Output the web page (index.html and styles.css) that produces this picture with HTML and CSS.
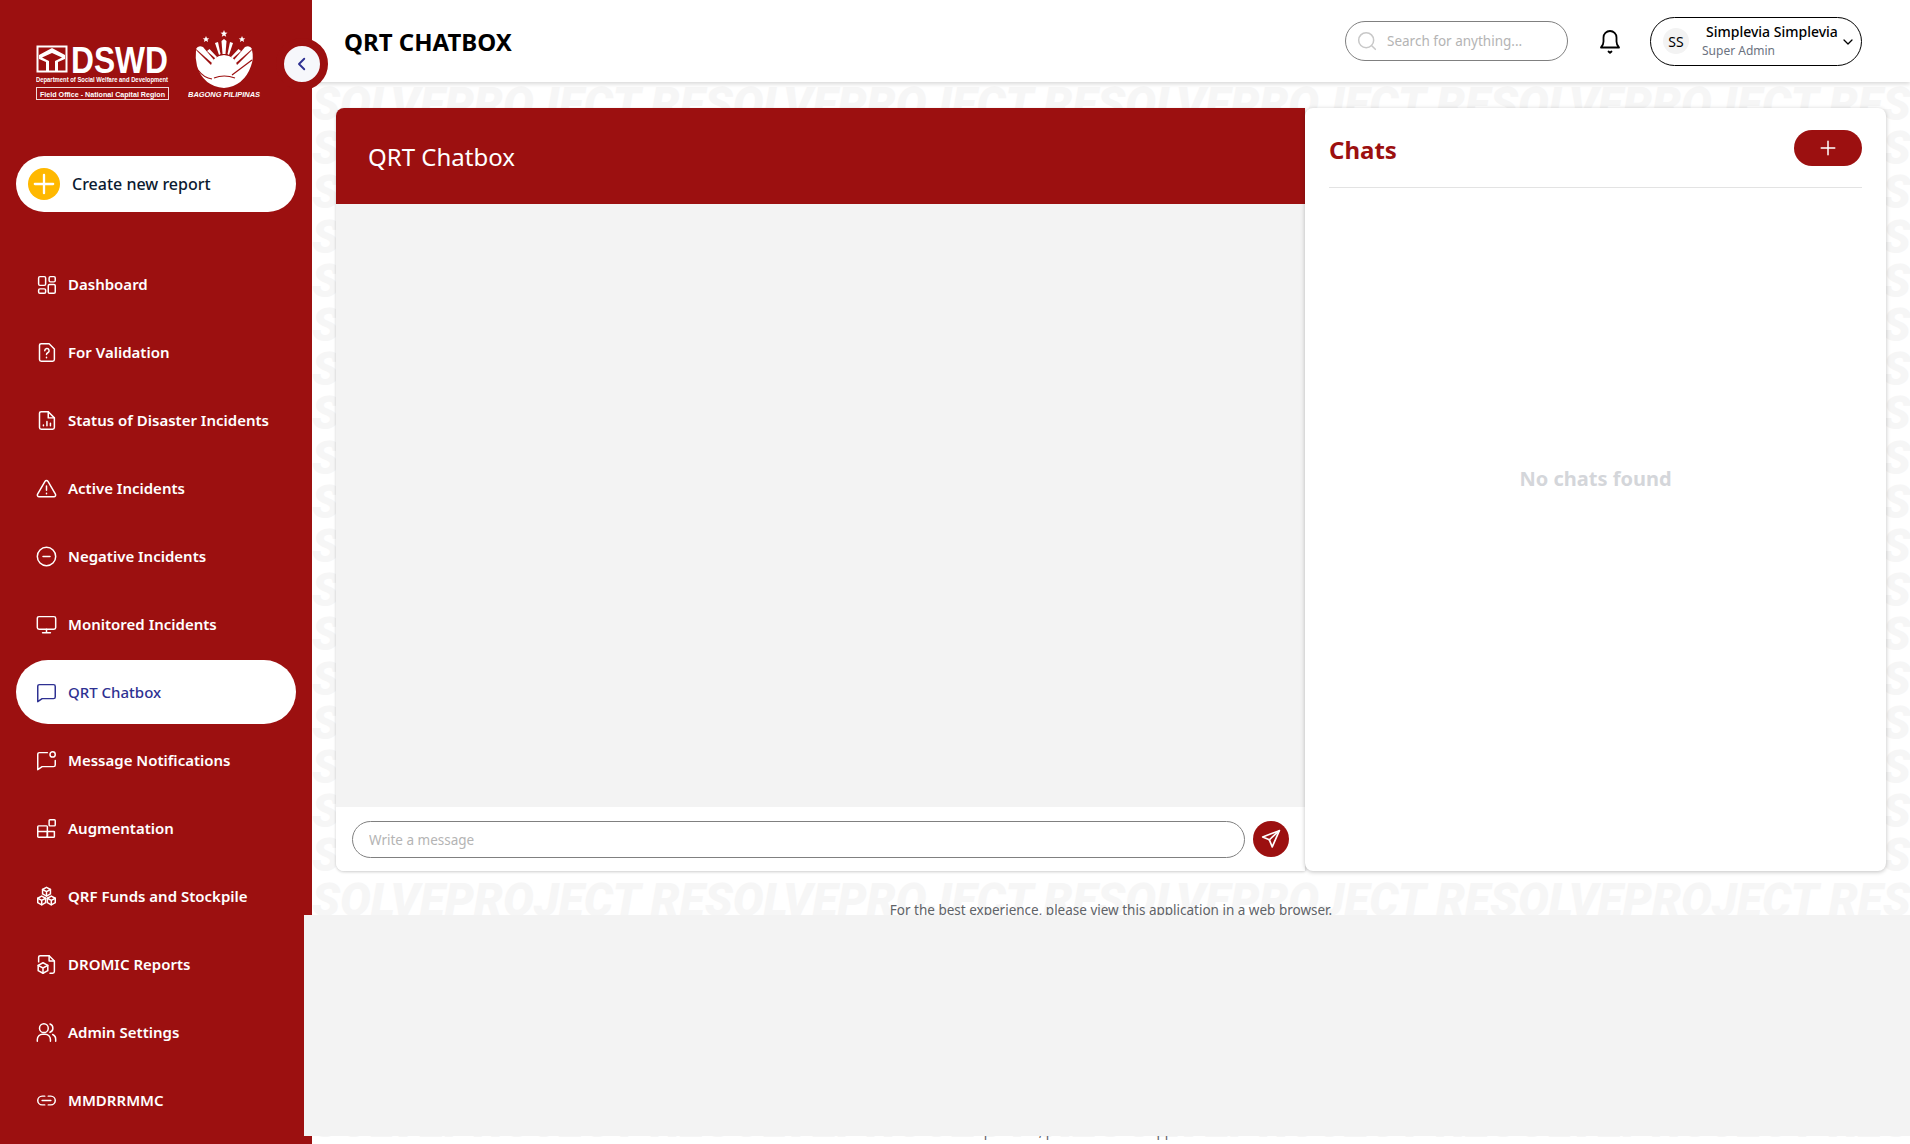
FILE: index.html
```html
<!DOCTYPE html>
<html lang="en">
<head>
    <meta charset="UTF-8">
    <meta name="viewport" content="width=device-width, initial-scale=1.0">
    <title>QRT Chatbox</title>
    <link rel="stylesheet" href="styles.css">
</head>
<body>

<aside class="sidebar">
    <div class="logos">
        <svg class="logo-dswd" width="134" height="72" viewBox="0 0 134 72">
            <rect x="0.5" y="17.5" width="31" height="27" fill="#fff"/>
            <rect x="2.5" y="19.5" width="27" height="23" fill="#9c1010"/>
            <path d="M3 27 L16 20 L29 27 V31 L22 34 V43 H19 V33 L26 29.500 L16 25 L6 29.500 L13 33 V43 H10 V34 L3 31 Z" fill="#fff"/>
            <text x="35" y="44.500" class="logo-word" textLength="97" lengthAdjust="spacingAndGlyphs">DSWD</text>
            <text x="0" y="54" class="logo-sub" textLength="132" lengthAdjust="spacingAndGlyphs">Department of Social Welfare and Development</text>
            <rect x="0.500" y="59.500" width="132" height="12" fill="none" stroke="#fff" stroke-width="1" opacity="0.85"/>
            <text x="4" y="68.500" class="logo-sub" textLength="125" lengthAdjust="spacingAndGlyphs">Field Office - National Capital Region</text>
        </svg>
        <svg class="logo-bagong" width="76" height="72" viewBox="0 0 76 72">
            <g fill="#fff">
                <path d="M36 2 l1 2.500 2.500 0.200 -2 1.600 0.700 2.500 -2.200 -1.400 -2.200 1.400 0.700 -2.500 -2 -1.600 2.500 -0.200 Z"/>
                <path d="M18 8 l1 2.200 2.300 0.200 -1.800 1.400 0.600 2.200 -2.100 -1.200 -2.100 1.200 0.600 -2.200 -1.800 -1.400 2.300 -0.200 Z"/>
                <path d="M54 8 l1 2.200 2.300 0.200 -1.800 1.400 0.600 2.200 -2.100 -1.200 -2.100 1.200 0.600 -2.200 -1.800 -1.400 2.300 -0.200 Z"/>
                <path d="M33.500 13 L36 11 L38.500 13 L37.500 26 H34.500 Z"/>
                <path d="M27 15 L30 14 L32.500 26 L31 27 Z"/>
                <path d="M45 15 L42 14 L39.500 26 L41 27 Z"/>
                <path d="M19 23 L21.500 21 L29 29 L27.500 30.500 Z"/>
                <path d="M53 23 L50.500 21 L43 29 L44.500 30.500 Z"/>
                <path d="M8 21 Q10 17 15 19 L26 32 L24 35 Z"/>
                <path d="M64 21 Q62 17 57 19 L46 32 L48 35 Z"/>
                <path d="M8 22 L23 37 Q25 28 36 27 Q47 28 49 37 L64 22 Q66 30 63 38 Q56 58 36 60 Q15 58 9 38 Q7 30 8 22 Z"/>
            </g>
            <path d="M64 32 L44 47 M26 50 Q36 46 47 50 M10 42 Q16 50 24 51" stroke="#9c1010" stroke-width="1.200" fill="none"/>
            <text x="0" y="69" class="logo-bp" textLength="72" lengthAdjust="spacingAndGlyphs">BAGONG PILIPINAS</text>
        </svg>
    </div>

    <button type="button" class="toggle-btn">
        <svg width="18" height="18" viewBox="0 0 24 24" class="stroke-icon"><path d="M15 5l-7 7 7 7"/></svg>
    </button>

    <a class="create-btn">
        <span class="create-plus">
            <svg width="22" height="22" viewBox="0 0 24 24" class="stroke-icon"><path d="M12 2v20M2 12h20"/></svg>
        </span>
        Create new report
    </a>

    <nav class="nav">
        <a class="nav-item">
            <svg viewBox="0 0 24 24" class="nav-icon"><rect x="3" y="3" width="8" height="10" rx="1.500"/><rect x="15" y="3" width="7" height="6" rx="1.500"/><rect x="3" y="17" width="8" height="5" rx="1.500"/><rect x="14" y="12" width="8" height="10" rx="1.500"/></svg>
            Dashboard
        </a>
        <a class="nav-item">
            <svg viewBox="0 0 24 24" class="nav-icon"><path d="M6 2h9l6 6v12a2 2 0 0 1-2 2H6a2 2 0 0 1-2-2V4a2 2 0 0 1 2-2z"/><path d="M10 10a2.500 2.500 0 1 1 3.500 2.300c-1 .5-1.500 1-1.500 2"/><path d="M12 17.500v.5"/></svg>
            For Validation
        </a>
        <a class="nav-item">
            <svg viewBox="0 0 24 24" class="nav-icon"><path d="M6 2h8l7 7v11a2 2 0 0 1-2 2H6a2 2 0 0 1-2-2V4a2 2 0 0 1 2-2z"/><path d="M14 2v7h7"/><path d="M8.500 18v-1M12.500 18v-5M16.500 18v-3"/></svg>
            Status of Disaster Incidents
        </a>
        <a class="nav-item">
            <svg viewBox="0 0 24 24" class="nav-icon"><path d="M10.300 3.800L1.800 18.500a2 2 0 0 0 1.700 3h17a2 2 0 0 0 1.700-3L13.700 3.800a2 2 0 0 0-3.400 0z"/><path d="M12 9v5M12 17.500v.5"/></svg>
            Active Incidents
        </a>
        <a class="nav-item">
            <svg viewBox="0 0 24 24" class="nav-icon"><circle cx="12" cy="12" r="10.500"/><path d="M8 12h8"/></svg>
            Negative Incidents
        </a>
        <a class="nav-item">
            <svg viewBox="0 0 24 24" class="nav-icon"><rect x="1.500" y="3" width="21" height="14.500" rx="2"/><path d="M12 17.500V21M7.500 21.500h9"/></svg>
            Monitored Incidents
        </a>
        <a class="nav-item nav-item-active">
            <svg viewBox="0 0 24 24" class="nav-icon"><path d="M2 5a2 2 0 0 1 2-2h16a2 2 0 0 1 2 2v12a2 2 0 0 1-2 2H7l-5 3.500z"/></svg>
            QRT Chatbox
        </a>
        <a class="nav-item">
            <svg viewBox="0 0 24 24" class="nav-icon"><path d="M13 3H4a2 2 0 0 0-2 2v17.500L7 19h13a2 2 0 0 0 2-2v-5"/><circle cx="19" cy="5" r="3"/></svg>
            Message Notifications
        </a>
        <a class="nav-item">
            <svg viewBox="0 0 24 24" class="nav-icon"><path d="M3 9h9a1 1 0 0 1 1 1v11a1 1 0 0 1-1 1H3a1 1 0 0 1-1-1V10a1 1 0 0 1 1-1z"/><path d="M2 15.500h18a1 1 0 0 1 1 0V21a1 1 0 0 1-1 1h-8M13 15.500V22"/><rect x="15" y="2" width="7" height="7" rx="1"/></svg>
            Augmentation
        </a>
        <a class="nav-item">
            <svg viewBox="0 0 24 24" class="nav-icon"><path d="M12 1.500l4.500 2.500v5L12 11.500 7.500 9V4z"/><path d="M6.500 11.500l4.500 2.500v5L6.500 21.500 2 19v-5z"/><path d="M17.500 11.500l4.500 2.500v5l-4.500 2.500L13 19v-5z"/><path d="M7.500 4L12 6.500 16.500 4M12 6.500v5M2 14l4.500 2.500L11 14M6.500 16.500v5M13 14l4.500 2.500L22 14M17.500 16.500v5"/></svg>
            QRF Funds and Stockpile
        </a>
        <a class="nav-item">
            <svg viewBox="0 0 24 24" class="nav-icon"><path d="M3 9V4a2 2 0 0 1 2-2h10l6 6v12a2 2 0 0 1-2 2h-3"/><path d="M15 2v6h6"/><path d="M8 10l5.500 3v6L8 22l-5.500-3v-6z"/><path d="M2.500 13L8 16l5.500-3M8 16v6"/></svg>
            DROMIC Reports
        </a>
        <a class="nav-item">
            <svg viewBox="0 0 24 24" class="nav-icon"><circle cx="9" cy="7" r="5"/><path d="M1.500 22v-2a6 6 0 0 1 6-6h3a6 6 0 0 1 6 6v2"/><path d="M16 2.300a5 5 0 0 1 0 9.400M19 14.300a6 6 0 0 1 3.500 5.700v2"/></svg>
            Admin Settings
        </a>
        <a class="nav-item">
            <svg viewBox="0 0 24 24" class="nav-icon"><path d="M10 7H7a5 5 0 0 0 0 10h3M14 7h3a5 5 0 0 1 0 10h-3M7 12h10"/></svg>
            MMDRRMMC
        </a>
    </nav>
</aside>

<main class="main">
    <div class="watermark">
        <div>SOLVEPROJECT RESOLVEPROJECT RESOLVEPROJECT RESOLVEPROJECT RESOLVE</div>
        <div>SOLVEPROJECT RESOLVEPROJECT RESOLVEPROJECT RESOLVEPROJECT RESOLVE</div>
        <div>SOLVEPROJECT RESOLVEPROJECT RESOLVEPROJECT RESOLVEPROJECT RESOLVE</div>
        <div>SOLVEPROJECT RESOLVEPROJECT RESOLVEPROJECT RESOLVEPROJECT RESOLVE</div>
        <div>SOLVEPROJECT RESOLVEPROJECT RESOLVEPROJECT RESOLVEPROJECT RESOLVE</div>
        <div>SOLVEPROJECT RESOLVEPROJECT RESOLVEPROJECT RESOLVEPROJECT RESOLVE</div>
        <div>SOLVEPROJECT RESOLVEPROJECT RESOLVEPROJECT RESOLVEPROJECT RESOLVE</div>
        <div>SOLVEPROJECT RESOLVEPROJECT RESOLVEPROJECT RESOLVEPROJECT RESOLVE</div>
        <div>SOLVEPROJECT RESOLVEPROJECT RESOLVEPROJECT RESOLVEPROJECT RESOLVE</div>
        <div>SOLVEPROJECT RESOLVEPROJECT RESOLVEPROJECT RESOLVEPROJECT RESOLVE</div>
        <div>SOLVEPROJECT RESOLVEPROJECT RESOLVEPROJECT RESOLVEPROJECT RESOLVE</div>
        <div>SOLVEPROJECT RESOLVEPROJECT RESOLVEPROJECT RESOLVEPROJECT RESOLVE</div>
        <div>SOLVEPROJECT RESOLVEPROJECT RESOLVEPROJECT RESOLVEPROJECT RESOLVE</div>
        <div>SOLVEPROJECT RESOLVEPROJECT RESOLVEPROJECT RESOLVEPROJECT RESOLVE</div>
        <div>SOLVEPROJECT RESOLVEPROJECT RESOLVEPROJECT RESOLVEPROJECT RESOLVE</div>
        <div>SOLVEPROJECT RESOLVEPROJECT RESOLVEPROJECT RESOLVEPROJECT RESOLVE</div>
        <div>SOLVEPROJECT RESOLVEPROJECT RESOLVEPROJECT RESOLVEPROJECT RESOLVE</div>
        <div>SOLVEPROJECT RESOLVEPROJECT RESOLVEPROJECT RESOLVEPROJECT RESOLVE</div>
        <div>SOLVEPROJECT RESOLVEPROJECT RESOLVEPROJECT RESOLVEPROJECT RESOLVE</div>
        <div>SOLVEPROJECT RESOLVEPROJECT RESOLVEPROJECT RESOLVEPROJECT RESOLVE</div>
        <div>SOLVEPROJECT RESOLVEPROJECT RESOLVEPROJECT RESOLVEPROJECT RESOLVE</div>
        <div>SOLVEPROJECT RESOLVEPROJECT RESOLVEPROJECT RESOLVEPROJECT RESOLVE</div>
        <div>SOLVEPROJECT RESOLVEPROJECT RESOLVEPROJECT RESOLVEPROJECT RESOLVE</div>
        <div>SOLVEPROJECT RESOLVEPROJECT RESOLVEPROJECT RESOLVEPROJECT RESOLVE</div>
    </div>

    <header class="topbar">
        <h1 class="page-title">QRT CHATBOX</h1>
        <div class="search">
            <svg width="20" height="20" viewBox="0 0 24 24" class="search-icon"><circle cx="11" cy="11" r="9"/><path d="M18 18l4 4"/></svg>
            <input type="text" placeholder="Search for anything...">
        </div>
        <svg class="bell" width="24" height="26" viewBox="0 0 24 26"><path d="M3 19.500c1.500-1.500 2.500-3 2.500-6V9.500a6.500 6.500 0 0 1 13 0v4c0 3 1 4.500 2.500 6z"/><path d="M10.500 23.500l1.500 1.300 1.500-1.300"/></svg>
        <div class="user-menu">
            <span class="avatar">SS</span>
            <div class="user-info">
                <div class="user-name">Simplevia Simplevia</div>
                <div class="user-role">Super Admin</div>
            </div>
            <svg class="user-caret" width="12" height="12" viewBox="0 0 24 24"><path d="M4 8l8 8 8-8"/></svg>
        </div>
    </header>

    <div class="content">
        <section class="chat-card">
            <div class="chat-head">QRT Chatbox</div>
            <div class="chat-body"></div>
            <form class="chat-form">
                <input type="text" class="chat-input" placeholder="Write a message">
                <button type="button" class="send-btn">
                    <svg width="20" height="20" viewBox="0 0 24 24" class="stroke-icon thin"><path d="M22 2L2 9.500l8 3.500 3.500 8.500z"/><path d="M22 2L10 13"/></svg>
                </button>
            </form>
        </section>
        <section class="chats-panel">
            <div class="chats-head">
                <h2>Chats</h2>
                <button type="button" class="add-chat">
                    <svg width="18" height="18" viewBox="0 0 24 24" class="stroke-icon thin"><path d="M12 3v18M3 12h18"/></svg>
                </button>
            </div>
            <div class="chats-empty">No chats found</div>
        </section>
    </div>

    <p class="note">For the best experience, please view this application in a web browser.</p>
    <p class="note note-repeat">For the best experience, please view this application in a web browser.</p>
</main>

<div class="blank-panel"></div>

</body>
</html>
```

FILE: styles.css
```css
* {
    box-sizing: border-box;
}
html, body {
    height: 100%;
}
body {
    margin: 0;
    display: flex;
    height: 1144px;
    overflow: hidden;
    position: relative;
    background: #fff;
    font-family: 'Noto Sans', 'Open Sans', sans-serif;
}
.stroke-icon {
    fill: none;
    stroke: currentColor;
    stroke-width: 2.5;
    stroke-linecap: round;
    stroke-linejoin: round;
}
.stroke-icon.thin {
    stroke-width: 2;
}

/* sidebar */
.sidebar {
    width: 312px;
    flex-shrink: 0;
    background: #9c1010;
    padding: 28px 16px 0;
    position: relative;
    z-index: 3;
}
.logos {
    display: flex;
    gap: 18px;
    height: 72px;
    margin-left: 20px;
    margin-bottom: 56px;
}
.logo-bagong {
    margin-top: 0;
}
.logo-word {
    font-family: 'Liberation Sans', sans-serif;
    font-weight: 700;
    font-size: 37px;
    fill: #fff;
}
.logo-sub {
    font-family: 'Liberation Sans', sans-serif;
    font-weight: 700;
    font-size: 6.500px;
    fill: #fff;
}
.logo-bp {
    font-family: 'Liberation Sans', sans-serif;
    font-weight: 700;
    font-style: italic;
    font-size: 7.500px;
    fill: #fff;
}
.toggle-btn {
    position: absolute;
    left: 276px;
    top: 38px;
    width: 52px;
    height: 52px;
    border-radius: 50%;
    border: 8px solid #9c1010;
    background: #f6f7fb;
    color: #2e3192;
    display: flex;
    align-items: center;
    justify-content: center;
    padding: 0;
}
.create-btn {
    display: flex;
    align-items: center;
    gap: 12px;
    height: 56px;
    padding-left: 12px;
    background: #fff;
    border-radius: 28px;
    font-size: 16px;
    font-weight: 500;
    color: #0b1a30;
}
.create-plus {
    width: 32px;
    height: 32px;
    border-radius: 50%;
    background: #ffb800;
    color: #fff;
    display: flex;
    align-items: center;
    justify-content: center;
}
.nav {
    margin-top: 40px;
    display: flex;
    flex-direction: column;
    gap: 4px;
}
.nav-item {
    display: flex;
    align-items: center;
    gap: 11px;
    height: 64px;
    padding-left: 20px;
    border-radius: 32px;
    color: #fff;
    font-size: 15px;
    font-weight: 600;
}
.nav-icon {
    width: 21px;
    height: 21px;
    flex-shrink: 0;
    fill: none;
    stroke: currentColor;
    stroke-width: 1.700;
    stroke-linecap: round;
    stroke-linejoin: round;
}
.nav-item-active {
    background: #fff;
    color: #2e3192;
    font-weight: 500;
}

/* main column */
.main {
    flex: 1;
    position: relative;
    min-width: 0;
}
.watermark {
    position: absolute;
    left: 0;
    top: 82px;
    right: 0;
    bottom: 0;
    overflow: hidden;
    color: #f6f6f6;
    font-family: Roboto, sans-serif;
    font-weight: 900;
    font-style: italic;
    font-size: 46px;
    line-height: 44.200px;
    white-space: nowrap;
}
.topbar {
    position: relative;
    height: 82px;
    background: #fff;
    box-shadow: 0 2px 4px rgba(0, 0, 0, 0.15);
    display: flex;
    align-items: center;
    padding-left: 32px;
}
.page-title {
    margin: 0;
    margin-right: auto;
    font-size: 24px;
    font-weight: 700;
    color: #000;
}
.search {
    width: 223px;
    height: 40px;
    border: 1px solid #808080;
    border-radius: 20px;
    display: flex;
    align-items: center;
    padding-left: 11px;
    gap: 10px;
}
.search-icon {
    flex-shrink: 0;
    fill: none;
    stroke: #c8c8c8;
    stroke-width: 1.800;
    stroke-linecap: round;
}
.search input {
    border: none;
    outline: none;
    width: 160px;
    font-family: inherit;
    font-size: 13.500px;
    padding: 0;
    background: transparent;
}
.search input::placeholder,
.chat-input::placeholder {
    color: #b4b4b4;
    opacity: 1;
}
.bell {
    margin-left: 30px;
    fill: none;
    stroke: #000;
    stroke-width: 1.800;
    stroke-linecap: round;
    stroke-linejoin: round;
}
.user-menu {
    margin-left: 28px;
    margin-right: 48px;
    width: 212px;
    height: 49px;
    border: 1.500px solid #000;
    border-radius: 25px;
    display: flex;
    align-items: center;
    padding-left: 12px;
    position: relative;
}
.avatar {
    width: 26px;
    height: 26px;
    border-radius: 50%;
    background: #f3f3f3;
    font-size: 14px;
    color: #000;
    display: flex;
    align-items: center;
    justify-content: center;
    flex-shrink: 0;
}
.user-info {
    margin-left: 13px;
}
.user-name {
    font-size: 14px;
    font-weight: 500;
    color: #000;
    padding-left: 4px;
    line-height: 20px;
}
.user-role {
    font-size: 12px;
    color: #6b7280;
    line-height: 18px;
}
.user-caret {
    position: absolute;
    right: 7px;
    top: 18px;
    fill: none;
    stroke: #000;
    stroke-width: 2.500;
    stroke-linecap: round;
    stroke-linejoin: round;
}
.content {
    position: relative;
    display: flex;
    height: 763px;
    margin: 26px 24px 0;
}
.chat-card {
    flex: 1;
    display: flex;
    flex-direction: column;
    border-radius: 8px 0 0 8px;
    overflow: hidden;
    box-shadow: 0 1px 3px rgba(0, 0, 0, 0.2);
    background: #fff;
}
.chat-head {
    height: 96px;
    background: #9c1010;
    color: #fff;
    font-size: 24px;
    display: flex;
    align-items: center;
    padding-left: 32px;
}
.chat-body {
    flex: 1;
    background: #f3f3f3;
}
.chat-form {
    height: 64px;
    display: flex;
    gap: 8px;
    padding: 14px 16px 0;
    background: #fff;
}
.chat-input {
    flex: 1;
    height: 37px;
    border: 1px solid #808080;
    border-radius: 19px;
    padding: 0 16px;
    font-family: inherit;
    font-size: 13.500px;
    outline: none;
}
.send-btn {
    width: 36px;
    height: 36px;
    border: none;
    border-radius: 50%;
    background: #9c1010;
    color: #fff;
    padding: 0;
    display: flex;
    align-items: center;
    justify-content: center;
}
.chats-panel {
    width: 581px;
    flex-shrink: 0;
    display: flex;
    flex-direction: column;
    background: #fff;
    border-radius: 8px;
    box-shadow: 0 1px 4px rgba(0, 0, 0, 0.25);
    padding: 22px 24px 0;
}
.chats-head {
    height: 58px;
    border-bottom: 1px solid #e3e3e3;
    display: flex;
    justify-content: space-between;
    align-items: flex-start;
}
.chats-head h2 {
    margin: 0;
    font-size: 24px;
    font-weight: 700;
    color: #9c1010;
    line-height: 40px;
}
.add-chat {
    width: 68px;
    height: 36px;
    border: none;
    border-radius: 18px;
    background: #9c1010;
    color: #fff;
    padding: 0;
    display: flex;
    align-items: center;
    justify-content: center;
}
.chats-empty {
    height: 580px;
    display: flex;
    align-items: center;
    justify-content: center;
    font-size: 20px;
    font-weight: 700;
    color: #d4d6da;
}
.note {
    position: relative;
    margin: 30px 0 0;
    text-align: center;
    font-size: 13.500px;
    line-height: 18px;
    color: #5f6368;
}
.note-repeat {
    margin-top: 203px;
}

/* blank sheet lying over everything */
.blank-panel {
    position: absolute;
    left: 304px;
    top: 915px;
    right: 0;
    height: 221px;
    background: #f3f3f3;
    z-index: 5;
}
```
